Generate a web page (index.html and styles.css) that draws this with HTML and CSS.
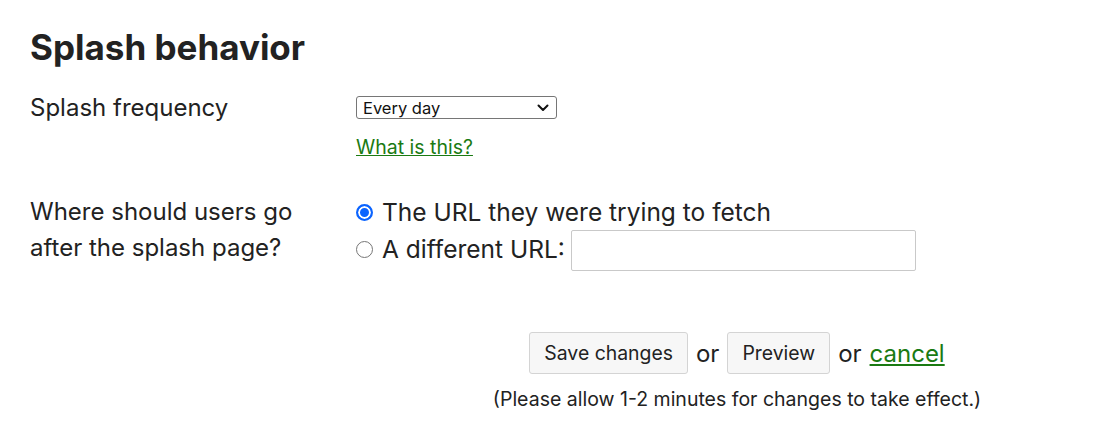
FILE: index.html
```html
<!DOCTYPE html>
<html>
<head>
<meta charset="utf-8">
<link rel="stylesheet" href="styles.css">
</head>
<body>
<div class="page">
  <h1 class="title">Splash behavior</h1>
  <div class="form">
    <div class="label">Splash frequency</div>
    <div class="field">
      <div class="select">
        <span>Every day</span>
        <svg class="chev" width="12" height="8" viewBox="0 0 12 8"><path d="M1.5 1.5 L6 6 L10.5 1.5" fill="none" stroke="#111" stroke-width="2" stroke-linecap="round" stroke-linejoin="round"/></svg>
      </div>
      <a class="link help" href="#">What is this?</a>
    </div>

    <div class="label label-2">Where should users go<br>after the splash page?</div>
    <div class="field field-2">
      <label class="radio-row">
        <span class="radio checked"></span>
        <span>The URL they were trying to fetch</span>
      </label>
      <label class="radio-row">
        <span class="radio"></span>
        <span>A different URL:</span>
        <span class="url-input"></span>
      </label>
    </div>

    <div class="actions">
      <div class="buttons">
        <span class="btn">Save changes</span>
        <span class="or">or</span>
        <span class="btn">Preview</span>
        <span class="or">or</span>
        <a class="link cancel" href="#">cancel</a>
      </div>
      <div class="note">(Please allow 1-2 minutes for changes to take effect.)</div>
    </div>
  </div>
</div>
</body>
</html>
```

FILE: styles.css
```css
html, body {
  margin: 0;
  padding: 0;
  overflow: hidden;
  background: #fff;
}
body {
  font-family: Inter, "Noto Sans", sans-serif;
  color: #222;
}
.page {
  padding: 24px 30px 0 30px;
}
.title {
  margin: 0;
  font-size: 35px;
  font-weight: 700;
  line-height: 46px;
  color: #222;
}
.form {
  display: grid;
  grid-template-columns: 326px 762px;
  margin-top: 20px;
}
.label {
  font-size: 24px;
  line-height: 36px;
}
.field {
  display: flex;
  flex-direction: column;
  align-items: flex-start;
  padding-top: 6px;
}
.select {
  box-sizing: border-box;
  width: 201px;
  height: 23px;
  border: 1px solid #767676;
  border-radius: 3px;
  display: flex;
  align-items: center;
  justify-content: space-between;
  padding: 0 7px 0 6px;
  font-size: 16.5px;
  color: #111;
}
.chev { display: block; }
.link {
  color: #1a7a12;
  text-decoration: underline;
}
.help {
  font-size: 19.5px;
  margin-top: 15px;
  line-height: 26px;
}
.label-2 { margin-top: 34px; }
.field-2 {
  margin-top: 34px;
  padding-top: 0;
}
.radio-row {
  display: flex;
  align-items: center;
  gap: 9px;
  font-size: 24.5px;
  line-height: 36px;
  height: 36px;
}
.radio-row + .radio-row { margin-top: 1px; }
.radio {
  box-sizing: border-box;
  width: 17px;
  height: 17px;
  border-radius: 50%;
  border: 1.5px solid #767676;
  background: #fff;
  flex: none;
}
.radio.checked {
  border: 2px solid #0b64ff;
  box-shadow: inset 0 0 0 2px #fff;
  background: #0b64ff;
}
.url-input {
  box-sizing: border-box;
  width: 345px;
  height: 41px;
  border: 1px solid #c9c9c9;
  border-radius: 2px;
  margin-left: -3px;
  margin-top: 2px;
}
.actions {
  grid-column: 2;
  margin-top: 65px;
  display: flex;
  flex-direction: column;
  align-items: center;
}
.buttons {
  display: flex;
  align-items: center;
  gap: 8px;
  font-size: 24px;
}
.btn {
  box-sizing: border-box;
  height: 42px;
  display: flex;
  align-items: center;
  padding: 0 14px;
  font-size: 19.4px;
  background: #f7f7f7;
  border: 1px solid #d4d4d4;
  border-radius: 3px;
  color: #222;
}
.or { color: #222; }
.cancel { font-size: 24px; }
.note {
  margin-top: 12px;
  font-size: 19.5px;
  line-height: 26px;
}
```
